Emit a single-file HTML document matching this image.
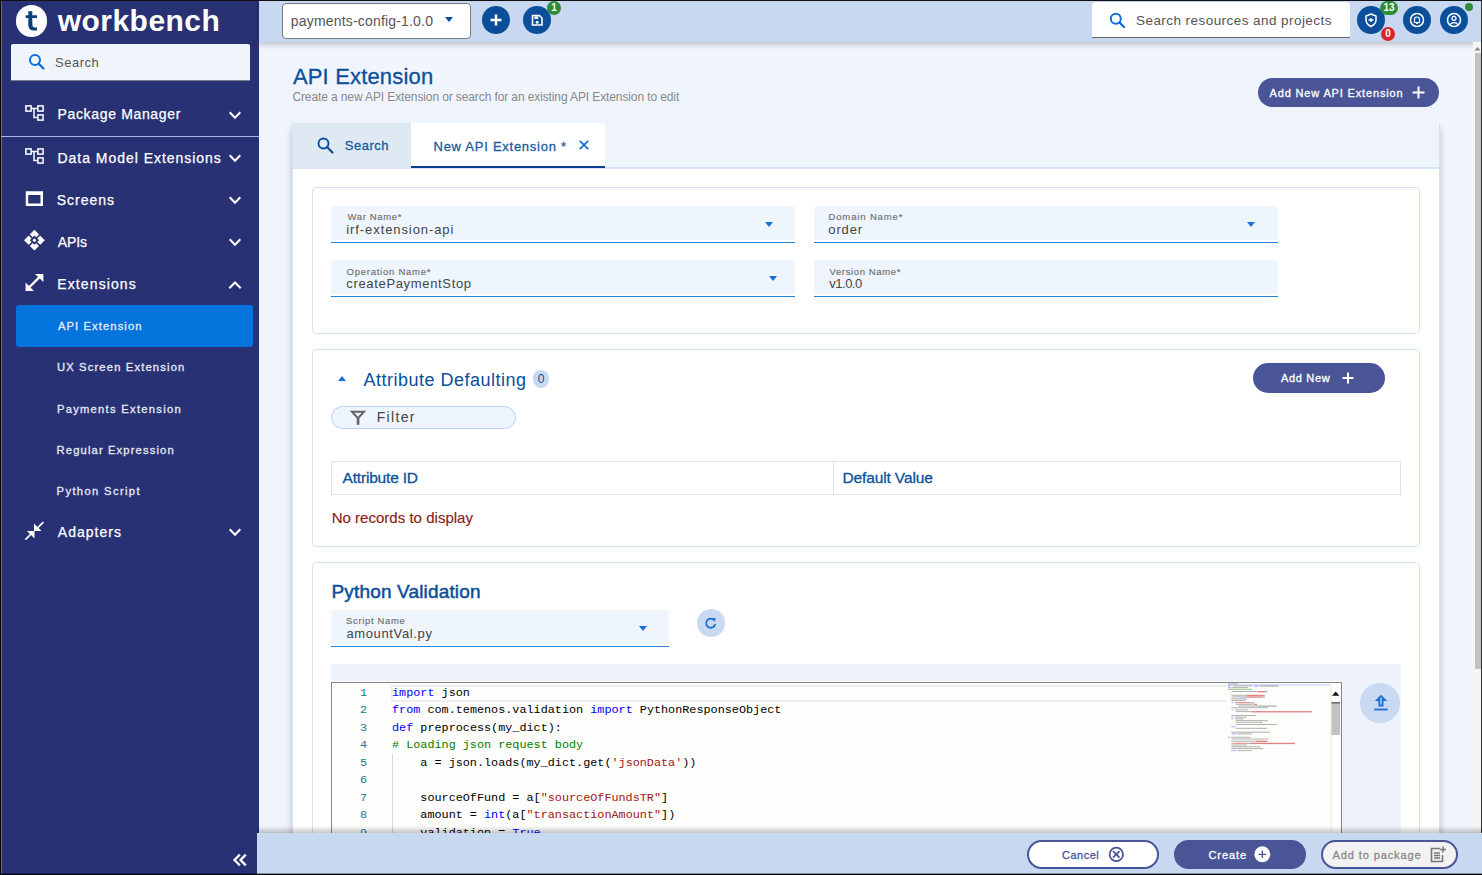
<!DOCTYPE html>
<html><head><meta charset="utf-8">
<style>
*{box-sizing:border-box;margin:0;padding:0}
html,body{width:1482px;height:875px;overflow:hidden;background:#f0f5fd;font-family:"Liberation Sans",sans-serif;position:relative}
.a{position:absolute;white-space:nowrap}
svg{position:absolute;overflow:visible}
/* sidebar */
#side{position:absolute;left:0;top:0;width:259px;height:875px;background:#293175}
.nav{position:absolute;left:57px;font-size:15px;color:#fff;white-space:nowrap}
.sub{position:absolute;left:57px;font-size:13px;color:#e6eaf6;font-weight:bold;white-space:nowrap}
/* top bar */
#top{position:absolute;left:259px;top:0;width:1223px;height:42px;background:#c7d8f0;box-shadow:0 2px 6px rgba(0,0,0,0.25)}
.rb{position:absolute;width:28px;height:28px;border-radius:50%;background:#0b4f9a}
.badge{position:absolute;height:14px;min-width:14px;border-radius:7px;color:#fff;font-size:10px;font-weight:bold;text-align:center;line-height:14px}
.panel{position:absolute;left:292px;top:123px;width:1148px;height:760px;background:#eff4fb;border-left:1px solid #d2e1f5;border-right:1px solid #d2e1f5;box-shadow:0 6px 7px rgba(0,0,0,0.24)}
.card{position:absolute;left:312px;width:1108px;background:#fff;border:1px solid #d3e2f6;border-radius:4px}
.fld{position:absolute;background:#eff5fd;border-radius:4px 4px 0 0}
.fld::after{content:"";position:absolute;left:0;right:0;top:35.8px;height:1.4px;background:#2583e0}
.lbl{position:absolute;left:15px;top:4px;font-size:10px;color:#666;white-space:nowrap}
.val{position:absolute;left:15px;top:15px;font-size:13px;color:#444;white-space:nowrap}
.tri{position:absolute;width:0;height:0;border-left:4.5px solid transparent;border-right:4.5px solid transparent;border-top:5px solid #1a6fd6}
.btn{position:absolute;border-radius:15px;background:#4a5597;color:#fff;font-weight:bold;font-size:12px;white-space:nowrap}
.ln{left:20px;width:15px;text-align:right;font-family:"Liberation Mono",monospace;font-size:11.8px;color:#237893;line-height:17px}
.cd{left:60px;font-family:"Liberation Mono",monospace;font-size:11.8px;color:#000;line-height:17px;white-space:pre}
</style></head><body>

<!-- SIDEBAR -->
<div id="side">
  <div class="a" style="left:0;top:0;width:1px;height:875px;background:#050505"></div><div class="a" style="left:1px;top:0;width:1px;height:875px;background:#6a6b7c"></div>
  <div class="a" style="left:15.5px;top:5px;width:31.5px;height:31.5px;border-radius:50%;background:#fff"></div>
  <svg style="left:0;top:0" width="50" height="40"><path d="M28.3 11.2 H32.3 V15.3 H37 V18.1 H32.3 V24.3 Q32.3 27.4 35 27.4 H37 V30.6 H34.3 Q28.3 30.6 28.3 25 V18.1 H25.6 V15.3 H28.3 Z" fill="#0b3f7a"/></svg>
  <div class="a" id="wb" style="left:57.8px;top:2.70px;font-size:30px;color:#fff;font-weight:bold;line-height:36px;letter-spacing:0.45px">workbench</div>
  <div class="a" style="left:11px;top:44px;width:239px;height:37px;background:#f0f5fd;border-radius:2px 2px 0 0;border-bottom:1px solid #7d7f8a"></div>
  <svg style="left:27.6px;top:53.2px" width="18" height="18" viewBox="0 0 18 18"><circle cx="7" cy="7" r="5" fill="none" stroke="#0a6fd9" stroke-width="2"/><path d="M10.6 10.6 L15.5 15.5" stroke="#0a6fd9" stroke-width="2.2" stroke-linecap="round"/></svg>
  <div class="a" id="s_search" style="left:55px;top:55px;font-size:13px;color:#555;letter-spacing:0.5px">Search</div>

  <div class="a" style="left:1px;top:136px;width:258px;height:1px;background:#a9b6e0"></div>

  <div class="nav" id="n1" style="left:57.50px;top:106.20px;font-size:14px;letter-spacing:0.66px;-webkit-text-stroke:0.25px #fff">Package Manager</div>
  <div class="nav" id="n2" style="left:57.50px;top:149.70px;font-size:14px;letter-spacing:0.97px;-webkit-text-stroke:0.25px #fff">Data Model Extensions</div>
  <div class="nav" id="n3" style="left:56.80px;top:191.80px;font-size:14px;letter-spacing:0.96px;-webkit-text-stroke:0.25px #fff">Screens</div>
  <div class="nav" id="n4" style="left:57.80px;top:234.05px;font-size:14px;letter-spacing:-0.09px;-webkit-text-stroke:0.25px #fff">APIs</div>
  <div class="nav" id="n5" style="left:57.30px;top:276.45px;font-size:14px;letter-spacing:1.11px;-webkit-text-stroke:0.25px #fff">Extensions</div>
  <div class="a" style="left:16px;top:305px;width:237px;height:42px;background:#0473db;border-radius:3px"></div>
  <div class="sub" id="s1" style="left:57.9px;top:320.30px;font-size:11.2px;letter-spacing:1.11px;font-weight:normal;-webkit-text-stroke:0.3px #e6eaf6">API Extension</div>
  <div class="sub" id="s2" style="left:56.9px;top:361.40px;font-size:11.2px;letter-spacing:1.17px;font-weight:normal;-webkit-text-stroke:0.3px #e6eaf6">UX Screen Extension</div>
  <div class="sub" id="s3" style="left:56.9px;top:402.90px;font-size:11.2px;letter-spacing:1.28px;font-weight:normal;-webkit-text-stroke:0.3px #e6eaf6">Payments Extension</div>
  <div class="sub" id="s4" style="left:56.6px;top:444.40px;font-size:11.2px;letter-spacing:1.14px;font-weight:normal;-webkit-text-stroke:0.3px #e6eaf6">Regular Expression</div>
  <div class="sub" id="s5" style="left:56.6px;top:484.70px;font-size:11.2px;letter-spacing:1.37px;font-weight:normal;-webkit-text-stroke:0.3px #e6eaf6">Python Script</div>
  <div class="nav" id="n6" style="left:57.80px;top:523.85px;font-size:14px;letter-spacing:1.01px;-webkit-text-stroke:0.25px #fff">Adapters</div>

  <!-- sidebar icons -->
  <svg style="left:0;top:0" width="259" height="875">
    <g fill="none" stroke="#fff" stroke-width="1.5">
      <rect x="25.9" y="105.9" width="5.2" height="5.2"/><rect x="37.9" y="105.9" width="5.2" height="5.2"/><rect x="37.9" y="114.9" width="5.2" height="5.2"/>
      <path d="M31 108.5 H38 M34 108.5 V117.5 H38"/>
      <rect x="25.9" y="148.9" width="5.2" height="5.2"/><rect x="37.9" y="148.9" width="5.2" height="5.2"/><rect x="37.9" y="157.9" width="5.2" height="5.2"/>
      <path d="M31 151.5 H38 M34 151.5 V160.5 H38"/>
      <path d="M25.8 191.3 H43 V205.9 H25.8 Z M28.2 195.1 V203.6 H40.5 V195.1 Z" fill="#fff" fill-rule="evenodd" stroke="none"/>
    </g>
    <g fill="#fff">
      <path d="M34.4 229.8 L44.8 240.2 L34.4 250.6 L24 240.2 Z"/>
      <path d="M28.5 234.3 L40.3 246.1 M40.3 234.3 L28.5 246.1" stroke="#293175" stroke-width="1.6"/>
      <path d="M34.4 235.6 L39 240.2 L34.4 244.8 L29.8 240.2 Z" fill="#293175"/>
      <path d="M34.4 238.2 L36.4 240.2 L34.4 242.2 L32.4 240.2 Z"/>
      <path d="M35 274 H43.4 V282 Z M25.6 282.6 V291 H33.9 Z"/><path d="M28.5 288 L40 276.6" stroke="#fff" stroke-width="2.3"/>
      <path d="M34 523.5 L34 531 L41.5 531 L38.6 528.1 L44 522.7 L42.8 521.5 L37.4 526.9 Z M34.5 538.5 L34.5 531 L27 531 L29.9 533.9 L24.8 539 L26 540.2 L31.1 535.1 Z"/>
    </g>
    <g fill="none" stroke="#fff" stroke-width="2" stroke-linecap="square">
      <path d="M230.4 113.0 L235 117.8 L239.6 113.0"/>
      <path d="M230.4 156.0 L235 160.8 L239.6 156.0"/>
      <path d="M230.4 198.0 L235 202.8 L239.6 198.0"/>
      <path d="M230.4 240.0 L235 244.8 L239.6 240.0"/>
      <path d="M230 287.5 L235 282.5 L240 287.5"/>
      <path d="M230.4 530.0 L235 534.8 L239.6 530.0"/>
      <path d="M239 855.5 L234.5 860 L239 864.5 M245 855.5 L240.5 860 L245 864.5" stroke-width="2.3"/>
    </g>
  </svg>
</div>

<!-- TOP BAR -->
<div class="a" style="left:0;top:0;width:1482px;height:1px;background:#111;z-index:5"></div>
<div id="top">
  <div class="a" style="left:23px;top:3px;width:189px;height:36px;background:#fff;border:1px solid #7a7a7a;border-radius:4px"></div>
  <div class="a" id="t_pc" style="left:31.8px;top:13.20px;font-size:14px;color:#555;letter-spacing:0.18px">payments-config-1.0.0</div>
  <div class="tri" style="left:186px;top:17px;border-top-color:#0b4f9a;border-left-width:4.5px;border-right-width:4.5px;border-top-width:5px"></div>
  <div class="rb" style="left:223px;top:6px"></div>
  <svg style="left:223px;top:6px" width="28" height="28"><path d="M14 8.5 V19.5 M8.5 14 H19.5" stroke="#fff" stroke-width="2.4"/></svg>
  <div class="rb" style="left:264px;top:6px"></div>
  <svg style="left:264px;top:6px" width="28" height="28"><path d="M9.5 9.5 H16.5 L19 12 V19 H9.5 Z" fill="none" stroke="#fff" stroke-width="1.6"/><rect x="11.3" y="10.3" width="4" height="2.6" fill="#fff"/><circle cx="14.2" cy="16.2" r="1.5" fill="#fff"/></svg>
  <div class="badge" style="left:288px;top:1px;background:#2e8b36">1</div>

  <div class="a" style="left:833px;top:2px;width:258px;height:36px;background:#fff;border-bottom:1.5px solid #666;border-radius:4px 4px 0 0"></div>
  <svg style="left:850px;top:12px" width="17" height="17" viewBox="0 0 17 17"><circle cx="6.8" cy="6.8" r="5" fill="none" stroke="#0a6fd9" stroke-width="2"/><path d="M10.4 10.4 L15 15" stroke="#0a6fd9" stroke-width="2.2" stroke-linecap="round"/></svg>
  <div class="a" id="t_sr" style="left:877.0px;top:13.2px;font-size:13.5px;color:#555;letter-spacing:0.44px">Search resources and projects</div>

  <div class="rb" style="left:1098px;top:6px"></div>
  <svg style="left:1098px;top:6px" width="28" height="28"><path d="M14 8 L19 10 V14 C19 17 17 19 14 20.5 C11 19 9 17 9 14 V10 Z" fill="none" stroke="#fff" stroke-width="1.5"/><path d="M11.5 14 H16.5 M14 12 V16" stroke="#fff" stroke-width="1.3"/></svg>
  <div class="badge" style="left:1121px;top:1px;width:18px;background:#2e8b36">13</div>
  <div class="badge" style="left:1122px;top:27px;background:#d8262c">0</div>
  <div class="rb" style="left:1144px;top:6px"></div>
  <svg style="left:1144px;top:6px" width="28" height="28"><circle cx="14" cy="14" r="6.5" fill="none" stroke="#fff" stroke-width="1.5"/><path d="M11.5 16.5 V13.5 A2.5 2.5 0 0 1 16.5 13.5 V16.5 Z M13 17.5 H15" stroke="#fff" stroke-width="1.2" fill="none"/></svg>
  <div class="rb" style="left:1181px;top:6px"></div>
  <svg style="left:1181px;top:6px" width="28" height="28"><circle cx="14" cy="14" r="6.5" fill="none" stroke="#fff" stroke-width="1.5"/><circle cx="14" cy="12.3" r="2" fill="none" stroke="#fff" stroke-width="1.3"/><path d="M10.3 18.5 C11.5 16 16.5 16 17.7 18.5" stroke="#fff" stroke-width="1.3" fill="none"/></svg>
  <div class="a" style="left:1206px;top:3px;width:8px;height:8px;border-radius:50%;background:#2e8b36"></div>
</div>


<!-- MAIN -->
<div class="a" id="t_title" style="left:292.90px;top:64.20px;font-size:22px;color:#0b4f9a;letter-spacing:0.17px;-webkit-text-stroke:0.3px #0b4f9a">API Extension</div>
<div class="a" id="t_sub" style="left:292.4px;top:90.30px;font-size:12px;color:#888;letter-spacing:-0.11px;-webkit-text-stroke:0px">Create a new API Extension or search for an existing API Extension to edit</div>
<div class="btn" style="left:1258px;top:78px;width:181px;height:29px"></div>
<div class="a" id="t_addapi" style="left:1269.5px;top:86.8px;font-size:11px;font-weight:normal;color:#fff;letter-spacing:0.85px;-webkit-text-stroke:0.3px #fff">Add New API Extension</div>
<svg style="left:1412px;top:86px" width="13" height="13"><path d="M6.5 0.5 V12.5 M0.5 6.5 H12.5" stroke="#fff" stroke-width="2"/></svg>

<div class="panel"></div>
<div class="a" style="left:293px;top:167px;width:1146px;height:2px;background:#d5e2f4"></div>
<div class="a" style="left:293px;top:123px;width:118px;height:45px;background:#dfe9f3"></div>
<div class="a" style="left:411px;top:123px;width:194px;height:45px;background:#fff;border-radius:0 4px 0 0;border-bottom:2px solid #0a3f8c"></div>
<svg style="left:317px;top:137px" width="17" height="17" viewBox="0 0 17 17"><circle cx="6.5" cy="6.5" r="5" fill="none" stroke="#0b4f9a" stroke-width="1.9"/><path d="M10 10 L15.5 15.5" stroke="#0b4f9a" stroke-width="2.2" stroke-linecap="round"/></svg>
<div class="a" id="t_tabsearch" style="left:344.7px;top:138.4px;font-size:13px;font-weight:normal;color:#1a5a9e;letter-spacing:0.52px;-webkit-text-stroke:0.3px #1a5a9e">Search</div>
<div class="a" id="t_tabnew" style="left:433.5px;top:139.1px;font-size:13px;font-weight:normal;color:#1a5a9e;letter-spacing:0.74px;-webkit-text-stroke:0.3px #1a5a9e">New API Extension <span style="color:#5a5f8f">*</span></div>
<svg style="left:579px;top:140px" width="10" height="10"><path d="M0.8 0.8 L9.2 9.2 M9.2 0.8 L0.8 9.2" stroke="#1a6fd6" stroke-width="1.8"/></svg>
<div class="a" style="left:293px;top:169px;width:1146px;height:700px;background:#fff"></div>

<!-- card 1 -->
<div class="card" style="top:187px;height:147px"></div>
<div class="fld" style="left:331px;top:206px;width:464px;height:34px"><div class="tri" style="left:434px;top:16px"></div></div>
<div class="a" id="l_warnam" style="left:347.5px;top:210.7px;font-size:9.5px;color:#6f6f6f;letter-spacing:0.65px;-webkit-text-stroke:0.15px #6f6f6f">War Name*</div>
<div class="a" id="v_warnam" style="left:346.30px;top:222.35px;font-size:13px;color:#444;letter-spacing:0.91px">irf-extension-api</div>
<div class="fld" style="left:814px;top:206px;width:464px;height:34px"><div class="tri" style="left:433px;top:16px"></div></div>
<div class="a" id="l_domain" style="left:828.5px;top:210.7px;font-size:9.5px;color:#6f6f6f;letter-spacing:0.86px;-webkit-text-stroke:0.15px #6f6f6f">Domain Name*</div>
<div class="a" id="v_domain" style="left:828.30px;top:222.35px;font-size:13px;color:#444;letter-spacing:0.88px">order</div>
<div class="fld" style="left:331px;top:260px;width:464px;height:34px"><div class="tri" style="left:438px;top:16px"></div></div>
<div class="a" id="l_operat" style="left:346.5px;top:265.6px;font-size:9.5px;color:#6f6f6f;letter-spacing:0.76px;-webkit-text-stroke:0.15px #6f6f6f">Operation Name*</div>
<div class="a" id="v_operat" style="left:346.30px;top:276.35px;font-size:13px;color:#444;letter-spacing:0.66px">createPaymentStop</div>
<div class="fld" style="left:814px;top:260px;width:464px;height:34px"></div>
<div class="a" id="l_versio" style="left:829.5px;top:265.6px;font-size:9.5px;color:#6f6f6f;letter-spacing:0.63px;-webkit-text-stroke:0.15px #6f6f6f">Version Name*</div>
<div class="a" id="v_versio" style="left:829.30px;top:276.35px;font-size:13px;color:#444;letter-spacing:-0.50px">v1.0.0</div>

<!-- card 2 -->
<div class="card" style="top:349px;height:198px"></div>
<div class="tri" style="left:338px;top:376px;border-top:none;border-bottom:5px solid #1a6fd6"></div>
<div class="a" id="t_attr" style="left:363.6px;top:370.00px;font-size:18px;color:#0b4f9a;letter-spacing:0.49px;-webkit-text-stroke:0px">Attribute Defaulting</div>
<div class="a" style="left:533px;top:370px;width:16px;height:18px;border-radius:8px;background:#c8d9f0"></div><div class="a" style="left:533px;top:370px;width:16px;height:18px;color:#1a4f9a;font-size:12px;text-align:center;line-height:19px">0</div>
<div class="a" style="left:331px;top:406px;width:185px;height:23px;border-radius:12px;background:#eff5fd;border:1px solid #bad0ee"></div>
<svg style="left:350px;top:410px" width="16" height="16"><path d="M2 1.8 H14 L8 8.2 Z" fill="none" stroke="#666" stroke-width="2" stroke-linejoin="miter"/><rect x="6.7" y="7.5" width="2.7" height="7.3" fill="#666"/></svg>
<div class="a" id="t_filter" style="left:376.7px;top:409.40px;font-size:14px;color:#444;letter-spacing:1.34px">Filter</div>
<div class="btn" style="left:1253px;top:363px;width:132px;height:30px"></div>
<div class="a" id="t_addnew" style="left:1281.0px;top:372.1px;font-size:11px;font-weight:normal;color:#fff;letter-spacing:0.67px;-webkit-text-stroke:0.3px #fff">Add New</div>
<svg style="left:1342px;top:372px" width="12" height="12"><path d="M6 0.5 V11.5 M0.5 6 H11.5" stroke="#fff" stroke-width="2"/></svg>
<div class="a" style="left:331px;top:461px;width:1070px;height:34px;border:1px solid #e2e2e2"></div>
<div class="a" style="left:833px;top:461px;width:1px;height:34px;background:#e2e2e2"></div>
<div class="a" id="t_colid" style="left:342.5px;top:468.70px;font-size:15.5px;font-weight:normal;color:#0b5299;letter-spacing:-0.18px;-webkit-text-stroke:0.3px #0b5299">Attribute ID</div>
<div class="a" id="t_colval" style="left:842.4px;top:468.70px;font-size:15.5px;font-weight:normal;color:#0b5299;letter-spacing:-0.12px;-webkit-text-stroke:0.3px #0b5299">Default Value</div>
<div class="a" id="t_norec" style="left:331.7px;top:509.40px;font-size:15px;color:#8b1a1a;letter-spacing:0.02px;-webkit-text-stroke:0.15px #8b1a1a">No records to display</div>

<!-- card 3 -->
<div class="card" style="top:562px;height:320px"></div>
<div class="a" id="t_pyval" style="left:331.5px;top:581.10px;font-size:19px;font-weight:normal;color:#0b4f9a;letter-spacing:0.16px;-webkit-text-stroke:0.5px #0b4f9a">Python Validation</div>
<div class="fld" style="left:331px;top:610px;width:338px;height:34px"><div class="tri" style="left:308px;top:16px"></div></div>
<div class="a" id="l_script" style="left:346.0px;top:614.7px;font-size:9.5px;color:#6f6f6f;letter-spacing:0.65px;-webkit-text-stroke:0.15px #6f6f6f">Script Name</div>
<div class="a" id="v_script" style="left:346.40px;top:626.35px;font-size:13px;color:#444;letter-spacing:0.64px">amountVal.py</div>
<div class="a" style="left:697px;top:609px;width:28px;height:28px;border-radius:50%;background:#c8d9f1"></div>
<svg style="left:697px;top:609px" width="28" height="28"><path d="M17.2 11.2 A4.6 4.6 0 1 0 18.2 15" fill="none" stroke="#1a6fd6" stroke-width="1.7"/><path d="M14.8 9.6 L18.6 9 L18 12.8 Z" fill="#1a6fd6"/></svg>

<div class="a" style="left:331px;top:664px;width:1070px;height:220px;background:#eef3fb"></div>
<div class="a" style="left:1360px;top:683px;width:40px;height:40px;border-radius:50%;background:#c8d9f1"></div>
<svg style="left:1360px;top:683px" width="40" height="40"><path d="M14.8 17.9 L21 11.7 L27.2 17.9 H23.5 V23.5 H18.4 V17.9 Z" fill="#1a6fd6"/><rect x="20.3" y="14.5" width="1.4" height="7" fill="#c8d9f1"/><rect x="14.3" y="25.6" width="13.4" height="1.8" fill="#1a6fd6"/></svg>
<div class="a" style="left:331px;top:680.7px;width:1011px;height:2px;background:#fbfcfe"></div><div id="editor" class="a" style="left:331px;top:682.4px;width:1011px;height:200px;background:#fdfdfb;border:1.7px solid #858585;border-bottom:none;overflow:hidden"></div>
<div class="a" style="left:332px;top:684px;width:1009px;height:160px;background:#fdfdfb;overflow:hidden">
<div class="a" style="left:59px;top:0.5px;width:836px;height:17px;border:2px solid #eeeeee;border-right:none"></div>
<div class="a" style="left:60px;top:70px;width:1px;height:100px;background:#d8d8d8"></div>
<div class="a ln" style="top:1.00px">1</div><div class="a cd" style="top:1.00px"><span style="color:#0000ff">import</span> json</div><div class="a ln" style="top:18.45px">2</div><div class="a cd" style="top:18.45px"><span style="color:#0000ff">from</span> com.temenos.validation <span style="color:#0000ff">import</span> PythonResponseObject</div><div class="a ln" style="top:35.90px">3</div><div class="a cd" style="top:35.90px"><span style="color:#0000ff">def</span> preprocess(my_dict):</div><div class="a ln" style="top:53.35px">4</div><div class="a cd" style="top:53.35px"><span style="color:#008000"># Loading json request body</span></div><div class="a ln" style="top:70.80px">5</div><div class="a cd" style="top:70.80px">    a = json.loads(my_dict.get(<span style="color:#a31515">'jsonData'</span>))</div><div class="a ln" style="top:88.25px">6</div><div class="a cd" style="top:88.25px"></div><div class="a ln" style="top:105.70px">7</div><div class="a cd" style="top:105.70px">    sourceOfFund = a[<span style="color:#a31515">"sourceOfFundsTR"</span>]</div><div class="a ln" style="top:123.15px">8</div><div class="a cd" style="top:123.15px">    amount = <span style="color:#0000ff">int</span>(a[<span style="color:#a31515">"transactionAmount"</span>])</div><div class="a ln" style="top:140.60px">9</div><div class="a cd" style="top:140.60px">    validation = <span style="color:#0000ff">True</span></div>
</div>


<!-- minimap + editor scrollbar -->
<svg style="left:0;top:0" width="1482" height="875">
<rect x="1228" y="684" width="102" height="1.6" fill="#d4e2f5"/>
<rect x="1228.0" y="683.4" width="5.1" height="1" fill="#7070ff" fill-opacity="0.55"/><rect x="1233.1" y="683.4" width="4.7" height="1" fill="#555" fill-opacity="0.45"/><rect x="1228.0" y="685.4" width="3.0" height="1" fill="#7070ff" fill-opacity="0.55"/><rect x="1233.1" y="685.4" width="19.3" height="1" fill="#555" fill-opacity="0.45"/><rect x="1254.1" y="685.4" width="4.7" height="1.3" fill="#7070ff" fill-opacity="0.55"/><rect x="1259.7" y="685.4" width="18.9" height="1.3" fill="#555" fill-opacity="0.45"/><rect x="1228.0" y="687.1" width="2.6" height="1" fill="#7070ff" fill-opacity="0.55"/><rect x="1231.4" y="687.1" width="16.3" height="1" fill="#555" fill-opacity="0.45"/><rect x="1228.0" y="688.8" width="24.4" height="1" fill="#30a030" fill-opacity="0.55"/><rect x="1231.4" y="691.0" width="24.9" height="1" fill="#555" fill-opacity="0.45"/><rect x="1257.1" y="691.0" width="7.7" height="1.3" fill="#d03030" fill-opacity="0.6"/><rect x="1264.8" y="691.0" width="2.6" height="1.3" fill="#555" fill-opacity="0.45"/><rect x="1231.4" y="694.8" width="15.4" height="1" fill="#555" fill-opacity="0.45"/><rect x="1246.9" y="694.8" width="16.3" height="1.3" fill="#d03030" fill-opacity="0.6"/><rect x="1263.1" y="694.8" width="1.7" height="1.3" fill="#555" fill-opacity="0.45"/><rect x="1231.4" y="696.4" width="8.6" height="1" fill="#555" fill-opacity="0.45"/><rect x="1240.0" y="696.4" width="3.4" height="1.3" fill="#7070ff" fill-opacity="0.55"/><rect x="1243.4" y="696.4" width="3.4" height="1.3" fill="#555" fill-opacity="0.45"/><rect x="1246.9" y="696.4" width="15.4" height="1.3" fill="#d03030" fill-opacity="0.6"/><rect x="1262.3" y="696.4" width="2.6" height="1.3" fill="#555" fill-opacity="0.45"/><rect x="1231.4" y="698.3" width="12.0" height="1" fill="#555" fill-opacity="0.45"/><rect x="1243.4" y="698.3" width="3.4" height="1.3" fill="#7070ff" fill-opacity="0.55"/><rect x="1231.4" y="700.0" width="13.7" height="1" fill="#555" fill-opacity="0.45"/><rect x="1231.4" y="702.1" width="2.1" height="1" fill="#7070ff" fill-opacity="0.55"/><rect x="1234.9" y="702.1" width="14.6" height="1" fill="#d03030" fill-opacity="0.6"/><rect x="1249.4" y="702.1" width="1.7" height="1.3" fill="#555" fill-opacity="0.45"/><rect x="1251.1" y="702.1" width="1.7" height="1.3" fill="#7070ff" fill-opacity="0.55"/><rect x="1252.8" y="702.1" width="1.7" height="1.3" fill="#555" fill-opacity="0.45"/><rect x="1235.7" y="703.8" width="1.7" height="1" fill="#7070ff" fill-opacity="0.55"/><rect x="1237.4" y="703.8" width="15.4" height="1" fill="#555" fill-opacity="0.45"/><rect x="1253.7" y="703.8" width="3.4" height="1.3" fill="#d03030" fill-opacity="0.6"/><rect x="1238.3" y="705.5" width="20.6" height="1" fill="#555" fill-opacity="0.45"/><rect x="1258.8" y="705.5" width="2.6" height="1.3" fill="#30a030" fill-opacity="0.55"/><rect x="1261.4" y="705.5" width="12.0" height="1.3" fill="#555" fill-opacity="0.45"/><rect x="1273.4" y="705.5" width="3.4" height="1.3" fill="#30a030" fill-opacity="0.55"/><rect x="1231.4" y="707.2" width="36.8" height="1" fill="#555" fill-opacity="0.45"/><rect x="1231.4" y="709.4" width="1.7" height="1" fill="#7070ff" fill-opacity="0.55"/><rect x="1234.9" y="709.4" width="12.9" height="1" fill="#555" fill-opacity="0.45"/><rect x="1235.7" y="711.1" width="16.3" height="1" fill="#555" fill-opacity="0.45"/><rect x="1252.0" y="711.1" width="59.6" height="1.3" fill="#d03030" fill-opacity="0.6"/><rect x="1231.4" y="715.0" width="24.9" height="1" fill="#555" fill-opacity="0.45"/><rect x="1231.4" y="716.7" width="1.7" height="1" fill="#7070ff" fill-opacity="0.55"/><rect x="1234.9" y="716.7" width="12.0" height="1" fill="#555" fill-opacity="0.45"/><rect x="1231.4" y="718.4" width="1.7" height="1" fill="#7070ff" fill-opacity="0.55"/><rect x="1234.9" y="718.4" width="8.6" height="1" fill="#555" fill-opacity="0.45"/><rect x="1235.7" y="720.1" width="29.1" height="1" fill="#555" fill-opacity="0.45"/><rect x="1264.8" y="720.1" width="2.6" height="1.3" fill="#30a030" fill-opacity="0.55"/><rect x="1235.7" y="721.8" width="24.0" height="1" fill="#555" fill-opacity="0.45"/><rect x="1259.7" y="721.8" width="2.6" height="1.3" fill="#30a030" fill-opacity="0.55"/><rect x="1235.7" y="724.0" width="41.1" height="1" fill="#555" fill-opacity="0.45"/><rect x="1231.4" y="726.1" width="4.3" height="1" fill="#7070ff" fill-opacity="0.55"/><rect x="1235.7" y="727.8" width="29.1" height="1" fill="#555" fill-opacity="0.45"/><rect x="1264.8" y="727.8" width="1.7" height="1.3" fill="#30a030" fill-opacity="0.55"/><rect x="1231.4" y="731.7" width="38.6" height="1" fill="#555" fill-opacity="0.45"/><rect x="1231.4" y="733.4" width="5.1" height="1" fill="#7070ff" fill-opacity="0.55"/><rect x="1237.4" y="733.4" width="14.6" height="1" fill="#555" fill-opacity="0.45"/><rect x="1228.0" y="736.8" width="2.6" height="1" fill="#7070ff" fill-opacity="0.55"/><rect x="1231.4" y="736.8" width="18.9" height="1" fill="#555" fill-opacity="0.45"/><rect x="1231.4" y="738.5" width="36.8" height="1" fill="#555" fill-opacity="0.45"/><rect x="1231.4" y="740.7" width="24.9" height="1" fill="#555" fill-opacity="0.45"/><rect x="1256.3" y="740.7" width="11.1" height="1.3" fill="#d03030" fill-opacity="0.6"/><rect x="1231.4" y="742.8" width="2.6" height="1" fill="#555" fill-opacity="0.45"/><rect x="1234.0" y="742.8" width="13.7" height="1" fill="#d03030" fill-opacity="0.6"/><rect x="1247.7" y="742.8" width="2.6" height="1.3" fill="#555" fill-opacity="0.45"/><rect x="1250.3" y="742.8" width="44.6" height="1.3" fill="#d03030" fill-opacity="0.6"/><rect x="1231.4" y="744.5" width="15.4" height="1" fill="#555" fill-opacity="0.45"/><rect x="1231.4" y="746.2" width="29.1" height="1" fill="#555" fill-opacity="0.45"/><rect x="1231.4" y="748.0" width="30.0" height="1" fill="#555" fill-opacity="0.45"/><rect x="1261.4" y="748.0" width="1.7" height="1.3" fill="#30a030" fill-opacity="0.55"/><rect x="1231.4" y="750.1" width="5.1" height="1" fill="#7070ff" fill-opacity="0.55"/><rect x="1237.4" y="750.1" width="14.6" height="1" fill="#555" fill-opacity="0.45"/>
<rect x="1330.5" y="684" width="10" height="150" fill="#fff"/>
<rect x="1330.5" y="684" width="1" height="150" fill="#e6e6e6"/>
<path d="M1332 695.8 L1335.7 691.5 L1339.4 695.8 Z" fill="#111"/>
<rect x="1331.5" y="702" width="8.5" height="33" fill="#c1c1c1"/>
<rect x="1331.5" y="702" width="8.5" height="1.5" fill="#666"/>
</svg>

<!-- page scrollbar -->
<div class="a" style="left:1473px;top:42px;width:9px;height:791px;background:#f5f5f5"></div>
<svg style="left:1473px;top:42px" width="9" height="20"><path d="M1.5 8.5 L4.5 5 L7.5 8.5 Z" fill="#888"/></svg>
<div class="a" style="left:1475px;top:53px;width:6px;height:616px;background:#c1c1c1"></div>
<div class="a" style="left:1481px;top:0;width:1px;height:875px;background:#333"></div>

<!-- BOTTOM BAR -->
<div class="a" style="left:257px;top:826px;width:1225px;height:7px;background:linear-gradient(rgba(0,0,0,0),rgba(0,0,0,0.22))"></div>
<div class="a" style="left:257px;top:833px;width:1225px;height:42px;background:#c7d8f0"></div>
<div class="a" style="left:1027px;top:840px;width:132px;height:29px;border-radius:15px;background:#fff;border:2px solid #4a5597"></div>
<div class="a" id="t_cancel" style="left:1062.0px;top:848.7px;font-size:11px;font-weight:normal;color:#4a5597;letter-spacing:0.50px;-webkit-text-stroke:0.3px #4a5597">Cancel</div>
<svg style="left:1108px;top:846px" width="17" height="17"><circle cx="8.3" cy="8.4" r="6.7" fill="none" stroke="#4a5597" stroke-width="1.8"/><path d="M5 5.1 L11.6 11.7 M11.6 5.1 L5 11.7" stroke="#4a5597" stroke-width="1.8"/></svg>
<div class="btn" style="left:1174px;top:840px;width:132px;height:29px"></div>
<div class="a" id="t_create" style="left:1208.5px;top:849.0px;font-size:11px;font-weight:normal;color:#fff;letter-spacing:0.90px;-webkit-text-stroke:0.3px #fff">Create</div>
<svg style="left:1254px;top:846px" width="17" height="17"><circle cx="8.3" cy="8.3" r="8" fill="#fff"/><path d="M8.3 4.5 V12.1 M4.5 8.3 H12.1" stroke="#4a5597" stroke-width="1.3"/></svg>
<div class="a" style="left:1321px;top:840px;width:137px;height:29px;border-radius:15px;background:#f2f2f2;border:2px solid #4a5597"></div>
<div class="a" id="t_addpkg" style="left:1332.5px;top:848.6px;font-size:11px;font-weight:normal;color:#8a8a8a;letter-spacing:0.90px;-webkit-text-stroke:0.3px #8a8a8a">Add to package</div>
<svg style="left:1430px;top:846px" width="17" height="17"><path d="M10 2.5 H1.5 V15.5 H12.5 V9" fill="none" stroke="#777" stroke-width="1.6"/><path d="M4 7 H10 M4 9.5 H10 M4 12 H10" stroke="#777" stroke-width="1.3"/><path d="M13 0.5 V6.5 M10 3.5 H16" stroke="#777" stroke-width="1.6"/></svg>
<div class="a" style="left:0;top:874px;width:1482px;height:1px;background:#050505"></div><div class="a" style="left:0;top:873px;width:1482px;height:1px;background:rgba(0,0,0,0.35)"></div>

</body></html>
